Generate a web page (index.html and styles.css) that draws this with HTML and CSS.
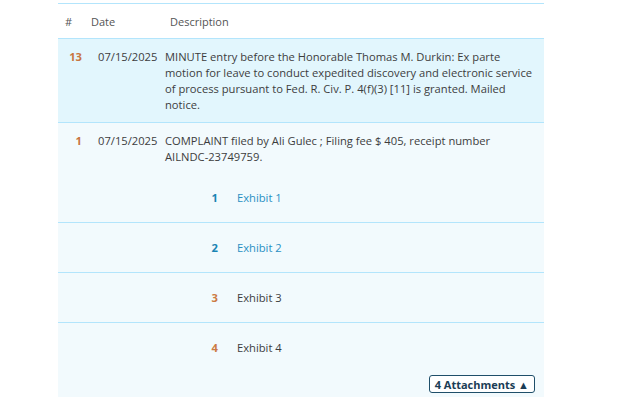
FILE: index.html
```html
<!DOCTYPE html>
<html>
<head>
<meta charset="utf-8">
<link rel="stylesheet" href="styles.css">
</head>
<body>
<div class="docket">
  <div class="head">
    <div class="h-num">#</div>
    <div class="h-date">Date</div>
    <div class="h-desc">Description</div>
  </div>
  <div class="entry entry-hl">
    <div class="main">
      <div class="num">13</div>
      <div class="date">07/15/2025</div>
      <div class="desc">MINUTE entry before the Honorable Thomas M. Durkin: Ex parte motion for leave to conduct expedited discovery and electronic service of process pursuant to Fed. R. Civ. P. 4(f)(3) [11] is granted. Mailed notice.</div>
    </div>
  </div>
  <div class="entry entry-open">
    <div class="main">
      <div class="num">1</div>
      <div class="date">07/15/2025</div>
      <div class="desc">COMPLAINT filed by Ali Gulec ; Filing fee $ 405, receipt number <span class="nowrap">AILNDC-23749759.</span></div>
    </div>
    <div class="attachments">
      <div class="att"><span class="att-num blue">1</span><a class="att-name link">Exhibit 1</a></div>
      <div class="att"><span class="att-num blue">2</span><a class="att-name link">Exhibit 2</a></div>
      <div class="att"><span class="att-num orange">3</span><span class="att-name">Exhibit 3</span></div>
      <div class="att"><span class="att-num orange">4</span><span class="att-name">Exhibit 4</span></div>
    </div>
    <div class="footer">
      <button class="toggle">4 Attachments ▲</button>
    </div>
  </div>
</div>
</body>
</html>
```
FILE: styles.css
```css
html, body {
  margin: 0;
  padding: 0;
  background: #ffffff;
}
body {
  font-family: "Open Sans", "Noto Sans", sans-serif;
  font-size: 11.2px;
  color: #3d3d3d;
}
.docket {
  width: 486px;
  margin: 3px 0 0 58px;
  border-top: 1px solid #b3e5fc;
}
.head {
  display: grid;
  grid-template-columns: 33px 79px 1fr;
  height: 34px;
  align-items: center;
  border-bottom: 1px solid #b3e5fc;
  color: #555;
  background: #fff;
  font-size: 11px;
}
.h-num {
  padding-left: 7px;
}
.entry {
  border-bottom: 1px solid #b3e5fc;
}
.entry-hl {
  background: #e2f6fd;
}
.entry-open {
  background: #f2fafd;
  border-bottom: none;
}
.main {
  display: grid;
  grid-template-columns: 24px 83px 1fr;
  padding: 10px 6px 9px 0;
  line-height: 16px;
}
.num {
  text-align: right;
  font-weight: 700;
  color: #c8753f;
}
.date {
  padding-left: 16px;
  white-space: nowrap;
}
.nowrap {
  white-space: nowrap;
}
.entry-open .main {
  padding-bottom: 0;
}
.attachments {
  margin-top: 8px;
}
.att {
  display: grid;
  grid-template-columns: 160px 1fr;
  column-gap: 19px;
  align-items: center;
  height: 49px;
}
.att + .att {
  border-top: 1px solid #b3e5fc;
}
.att-num {
  text-align: right;
  font-weight: 700;
}
.blue {
  color: #1a84b3;
}
.orange {
  color: #cc7a43;
}
.link {
  color: #2a90c3;
  text-decoration: none;
}
.footer {
  display: flex;
  justify-content: flex-end;
  padding: 3px 9px 4px 0;
}
.toggle {
  font-family: "Open Sans", "Noto Sans", sans-serif;
  font-size: 11px;
  font-weight: 700;
  color: #1b3c55;
  background: #fff;
  border: 1.5px solid #1f4f6a;
  border-radius: 3px;
  padding: 0 5px;
  height: 18px;
  line-height: 15px;
}
```
